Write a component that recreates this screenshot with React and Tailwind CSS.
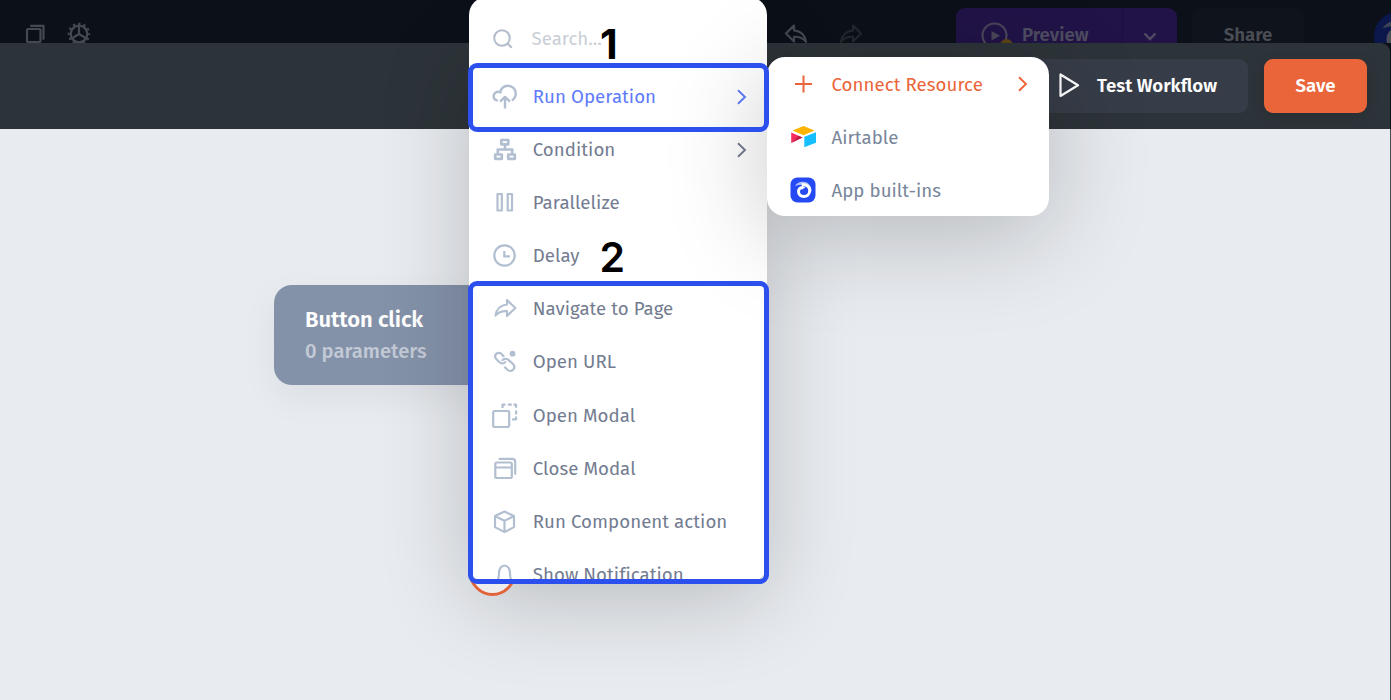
import React from "react";

const FONT = "font-['Fira_Sans','Noto_Sans',sans-serif]";

function Icon({ children, size = 26, className = "" }) {
  return (
    <svg
      width={size}
      height={size}
      viewBox={`0 0 ${size} ${size}`}
      fill="none"
      stroke="currentColor"
      strokeWidth="2.200"
      strokeLinecap="round"
      strokeLinejoin="round"
      className={`shrink-0 ${className}`}
    >
      {children}
    </svg>
  );
}

function Chevron({ className = "" }) {
  return (
    <svg width="10" height="16" viewBox="0 0 10 16" fill="none" stroke="currentColor" strokeWidth="1.900" className={`shrink-0 ${className}`}>
      <path d="M1 1.200 8 8l-7 6.800" />
    </svg>
  );
}

const icons = {
  cloud: (
    <Icon>
      <path
        strokeWidth="2.400"
        strokeLinecap="butt"
        d="M5.800 16.500A4.600 4.600 0 0 1 1.600 12.300 4.500 4.500 0 0 1 6 7.700c1.300 0 2.500.4 3.300 1.400M8.200 8.300A7.700 7.700 0 0 1 16 1.700a7.700 7.700 0 0 1 7.700 7.700c0 3-1.300 5.300-3.700 7M13 24.500V13.200M8 17.700 13 12.900l5 4.800"
      />
    </Icon>
  ),
  condition: (
    <Icon>
      <path strokeWidth="2.700" d="M9.300 3h7v4.300h-7zM13 7.500v4.500M5.800 16v-3.500h14.400V16M3.200 17.500h6.600v4.300H3.200zM16.200 17.500h6.600v4.300h-6.600z" />
    </Icon>
  ),
  parallel: (
    <Icon>
      <path strokeWidth="2.200" d="M5.500 4h4.300v16.500H5.500zM15.700 4H20v16.500h-4.300z" />
    </Icon>
  ),
  delay: (
    <Icon>
      <circle cx="12.500" cy="12.500" r="10.200" />
      <path strokeLinecap="butt" strokeLinejoin="miter" d="M12.300 8v5.300h5.700" />
    </Icon>
  ),
  navigate: (
    <Icon>
      <path d="M15 4 23.300 12 15 20v-4.800c-5.500-.4-8.500.8-11.500 4.300 1-6.500 4.500-10.200 11.500-11z" />
    </Icon>
  ),
  url: (
    <Icon>
      <path d="M11.500 7.200 10 5.400C8.300 3.500 5.800 3.300 4.300 4.900 2.700 6.500 3 8.700 4.500 10.300l3 2.900c1.700 1.600 4.300 1.500 5.700-.1M10.500 11.200c1.300-1.700 3.700-1.900 5.500-.5l4.700 4c1.900 1.700 2.100 4.100.6 5.800-1.500 1.700-4.200 1.700-5.900.2l-2.300-2.200" />
      <circle cx="20.500" cy="4.700" r="2.900" fill="currentColor" stroke="none" />
    </Icon>
  ),
  openModal: (
    <Icon>
      <rect x="1.200" y="8" width="16" height="16" rx="1.500" />
      <path strokeLinecap="butt" d="M10.500 5V1.700h3M15.800 1.700h4M21.500 1.700h2.600v3M24.100 7.500v4M24.100 13.500v2.800h-4" />
    </Icon>
  ),
  closeModal: (
    <Icon>
      <rect x="3.300" y="6.500" width="16.500" height="15.500" rx="1.500" />
      <path d="M3.500 11.500h16M7.500 2.800h12.700a3 3 0 0 1 3 3v12" />
    </Icon>
  ),
  cube: (
    <Icon>
      <path d="M12.500 2.600 22 7.100v11L12.500 23.100 3 18.100v-11zM3.300 7.300l9.200 4.500 9.200-4.500M12.500 11.800v11" />
    </Icon>
  ),
  bell: (
    <Icon>
      <path d="M3.500 19.500h18M4.500 19.500c1.700-1.500 2.500-4.500 2.500-8.500a5.500 7.500 0 0 1 11 0c0 4 .8 7 2.500 8.500" />
    </Icon>
  ),
};

const items = [
  { icon: "cloud", label: "Run Operation", arrow: true, active: true },
  { icon: "condition", label: "Condition", arrow: true },
  { icon: "parallel", label: "Parallelize" },
  { icon: "delay", label: "Delay" },
  { icon: "navigate", label: "Navigate to Page" },
  { icon: "url", label: "Open URL" },
  { icon: "openModal", label: "Open Modal" },
  { icon: "closeModal", label: "Close Modal" },
  { icon: "cube", label: "Run Component action" },
  { icon: "bell", label: "Show Notification" },
];

function Swirl({ size, bg, light, shade, round }) {
  return (
    <svg width={size} height={size} viewBox="0 0 26 26" className="shrink-0" fill="none">
      <rect x="0.500" y="0.500" width="25" height="25" rx={round ? 12.5 : 7} fill={bg} />
      <path d="M5 9C8 4.200 15 3.500 19 7.300c2 2 2.800 4.700 2.300 7.700C19.500 9.500 14.500 5.800 5 9z" fill={shade} />
      <path
        d="M13 7.700c4 .1 6.700 2.400 6.700 5.800 0 3.500-2.700 6-5.900 6-3.100 0-5.300-2.100-5.300-4.900 0-2.400 1.600-4 3.600-4"
        stroke={light}
        strokeWidth="3"
        strokeLinecap="round"
      />
      <path d="M12 9.200c1.700-.2 3 .6 3.300 1.800-1.500-.3-2.800.6-3 2.300z" fill={light} />
    </svg>
  );
}

function TopBar() {
  return (
    <div className="flex h-[43px] w-full overflow-hidden bg-[#0c1019] pl-[25px] text-[#454951]">
      <Icon size={22} className="mt-[24px]">
        <rect x="2" y="5" width="13.500" height="13" rx="1" />
        <path d="M6 1.800h12.500v13" />
      </Icon>
      <svg width="24" height="24" viewBox="0 0 24 24" fill="none" stroke="currentColor" className="ml-[20px] mt-[22px] shrink-0">
        <circle cx="12" cy="12" r="8.300" strokeWidth="2.200" />
        <circle cx="12" cy="12" r="10.200" strokeWidth="2.200" strokeDasharray="2.400 2.940" strokeDashoffset="1.200" />
        <path strokeWidth="2.200" d="M12 3.500V12M12 12l-7.300 4.500M12 12l7.300 4.500" />
      </svg>
      <Icon size={24} className="ml-[693px] mt-[22px] text-[#454951]">
        <path d="M10 3.500 2 11.500l8 8v-4.700c5-.3 8.500.8 12 5-1-7-5-10.700-12-11.500z" />
      </Icon>
      <Icon size={24} className="ml-[31px] mt-[22px] text-[#23272f]">
        <path d="M14 3.500 22 11.500l-8 8v-4.700c-5-.3-8.500.8-12 5 1-7 5-10.700 12-11.500z" />
      </Icon>
      <div className="ml-[93px] mt-[8px] flex h-[54px] w-[221px] shrink-0 rounded-[9px] bg-[#211347] pl-[25px]">
        <svg width="33" height="33" viewBox="0 0 33 33" fill="none" className="mt-[14px] shrink-0">
          <circle cx="13.500" cy="13.500" r="12" stroke="#4a4559" strokeWidth="2.200" />
          <path d="M10.500 9v9.500l8.500-4.700z" fill="#4a4559" />
          <circle cx="25.500" cy="23.500" r="6.500" fill="#5a4417" />
        </svg>
        <span className="ml-[8px] mt-[14px] w-[100px] text-[18.670px] leading-[26px] font-semibold text-[#4d4c60]">Preview</span>
        <span className="flex h-full w-[55px] justify-center border-l border-[#1a1039]">
          <svg width="14" height="10" viewBox="0 0 14 10" fill="none" stroke="#504c61" strokeWidth="2.400" className="mt-[24px]">
            <path d="M1.500 1.500 7 7l5.500-5.500" />
          </svg>
        </span>
      </div>
      <div className="ml-[15px] mt-[8px] flex h-[54px] w-[112px] shrink-0 justify-center rounded-[9px] bg-[#0f131c] pt-[14px] text-[18.670px] leading-[26px] font-semibold text-[#4b4e54]">
        Share
      </div>
      <div className="ml-[69px] mt-[11px] shrink-0">
        <Swirl size={50} bg="#0c174c" light="#4b4f5a" shade="#3f4557" round />
      </div>
    </div>
  );
}

function EditorHeader() {
  return (
    <div className="flex bg-[#0c1019]">
      <header className="flex h-[86px] w-[1390px] items-center justify-end gap-[16px] rounded-tr-[9px] bg-[#2d3439] pr-[23px] text-white">
        <button className="flex h-[54px] w-[218px] items-center rounded-[9px] bg-[#373d48] pl-[28px]">
          <svg width="22" height="26" viewBox="0 0 22 26" fill="none" stroke="white" strokeWidth="2.200" strokeLinejoin="round" className="shrink-0">
            <path d="M2.500 1.500v21.500L20 12.300z" />
          </svg>
          <span className="ml-[17px] whitespace-nowrap text-[18.670px] leading-[26px] font-semibold">Test Workflow</span>
        </button>
        <button className="h-[54px] w-[103px] rounded-[9px] bg-[#ea6539] text-[18.670px] font-semibold shadow-[0_4px_14px_rgba(0,0,0,0.12)]">
          Save
        </button>
      </header>
    </div>
  );
}

function ActionMenu() {
  return (
    <div className="absolute left-[469px] top-[-3px] h-[585px] w-[298px] overflow-hidden rounded-[18px] bg-white">
      <div className="flex h-[73px] items-center pl-[24px] pt-[10px] text-[#c9ced6]">
        <svg width="20" height="20" viewBox="0 0 20 20" fill="none" stroke="#b3bccb" strokeWidth="2" className="shrink-0">
          <circle cx="9" cy="9" r="7.800" />
          <path d="m14.500 14.500 4.300 4.300" />
        </svg>
        <span className="ml-[18.500px] text-[18.670px] leading-[24px]">Search...</span>
      </div>
      <ul>
        {items.map((it) => (
          <li key={it.label} className={`flex h-[53.160px] items-center pl-[23px] pr-[20px] ${it.active ? "text-[#5e7bfa]" : "text-[#737c90]"}`}>
            <span className="text-[#b2bfd1]">{icons[it.icon]}</span>
            <span className="ml-[14.750px] flex-1 whitespace-nowrap text-[18.670px] leading-[24px] tracking-[0.050px]">{it.label}</span>
            {it.arrow && <Chevron />}
          </li>
        ))}
      </ul>
    </div>
  );
}

function ResourceMenu() {
  return (
    <div className="absolute left-[767px] top-[57px] flex h-[159px] w-[282px] flex-col rounded-[18px] bg-white pl-[23px] text-[18.670px] leading-[24px] tracking-[0.050px] text-[#78869a] shadow-[0_18px_100px_rgba(0,0,0,0.220)]">
      <div className="flex h-[53px] items-center pr-[21px] text-[#ea6539]">
        <Icon>
          <path strokeLinecap="butt" strokeWidth="2" d="M13.500 4.500v17M5 13h17" />
        </Icon>
        <span className="ml-[15.500px] flex-1 whitespace-nowrap pt-[2px]">Connect Resource</span>
        <Chevron />
      </div>
      <div className="flex h-[53px] items-center">
        <svg width="26" height="22" viewBox="0 0 26 22" className="shrink-0">
          <path d="M13.500 0 24.500 4.500 13.500 9.200 2.500 4.500z" fill="#fdb400" />
          <path d="M1.200 6.500 12.500 11.500 1.200 17z" fill="#f82b60" />
          <path d="M8.500 9.700 12.500 11.500 2 16.600z" fill="#ba1e45" />
          <path d="M14.300 10.800 26 6.200v10.500L14.300 21.300z" fill="#18bfff" />
        </svg>
        <span className="ml-[15.500px] pt-[2px]">Airtable</span>
      </div>
      <div className="flex h-[53px] items-center">
        <Swirl size={26} bg="#254af4" light="#ffffff" shade="#b5c3fb" />
        <span className="ml-[15.500px] pt-[2px]">App built-ins</span>
      </div>
    </div>
  );
}

export default function App() {
  return (
    <div className={`relative flex h-[700px] w-[1391px] flex-col overflow-hidden bg-[#e8ebef] ${FONT}`}>
      <TopBar />
      <EditorHeader />
      <main className="relative flex-1 border-r border-[#484c52]">
        <div className="absolute left-[274px] top-[156px] h-[100px] w-[220px] rounded-[18px] bg-[#8492a9] pl-[31px] pt-[21px] shadow-[0_12px_36px_rgba(0,0,0,0.060)]">
          <div className="text-[22px] leading-[28px] font-semibold tracking-[-0.080px] text-white">Button click</div>
          <div className="mt-[2px] text-[20.200px] leading-[30px] font-medium text-[#c3cad6]">0 parameters</div>
        </div>
      </main>
      <div className="absolute left-[469px] top-[40px] h-[540px] w-[298px] rounded-[18px] shadow-[0_20px_90px_rgba(0,0,0,0.200)]" />
      <div className="absolute left-[469px] top-[549px] h-[47px] w-[47px] rounded-full border-[3px] border-[#e2623a] bg-[#eeeeef]" />
      <ActionMenu />
      <ResourceMenu />
      <div className="absolute left-[468px] top-[63px] h-[69px] w-[301px] rounded-[9px] border-[5px] border-[#2b50ee]" />
      <div className="absolute left-[468px] top-[281px] h-[303px] w-[301px] rounded-[9px] border-[5px] border-[#2b50ee]" />
      <div className="absolute left-[600px] top-[19px] font-['Inter',sans-serif] text-[41px] leading-[50px] font-bold text-black">1</div>
      <div className="absolute left-[599.500px] top-[232px] font-['Inter',sans-serif] text-[41px] leading-[50px] font-semibold text-black">2</div>
    </div>
  );
}
